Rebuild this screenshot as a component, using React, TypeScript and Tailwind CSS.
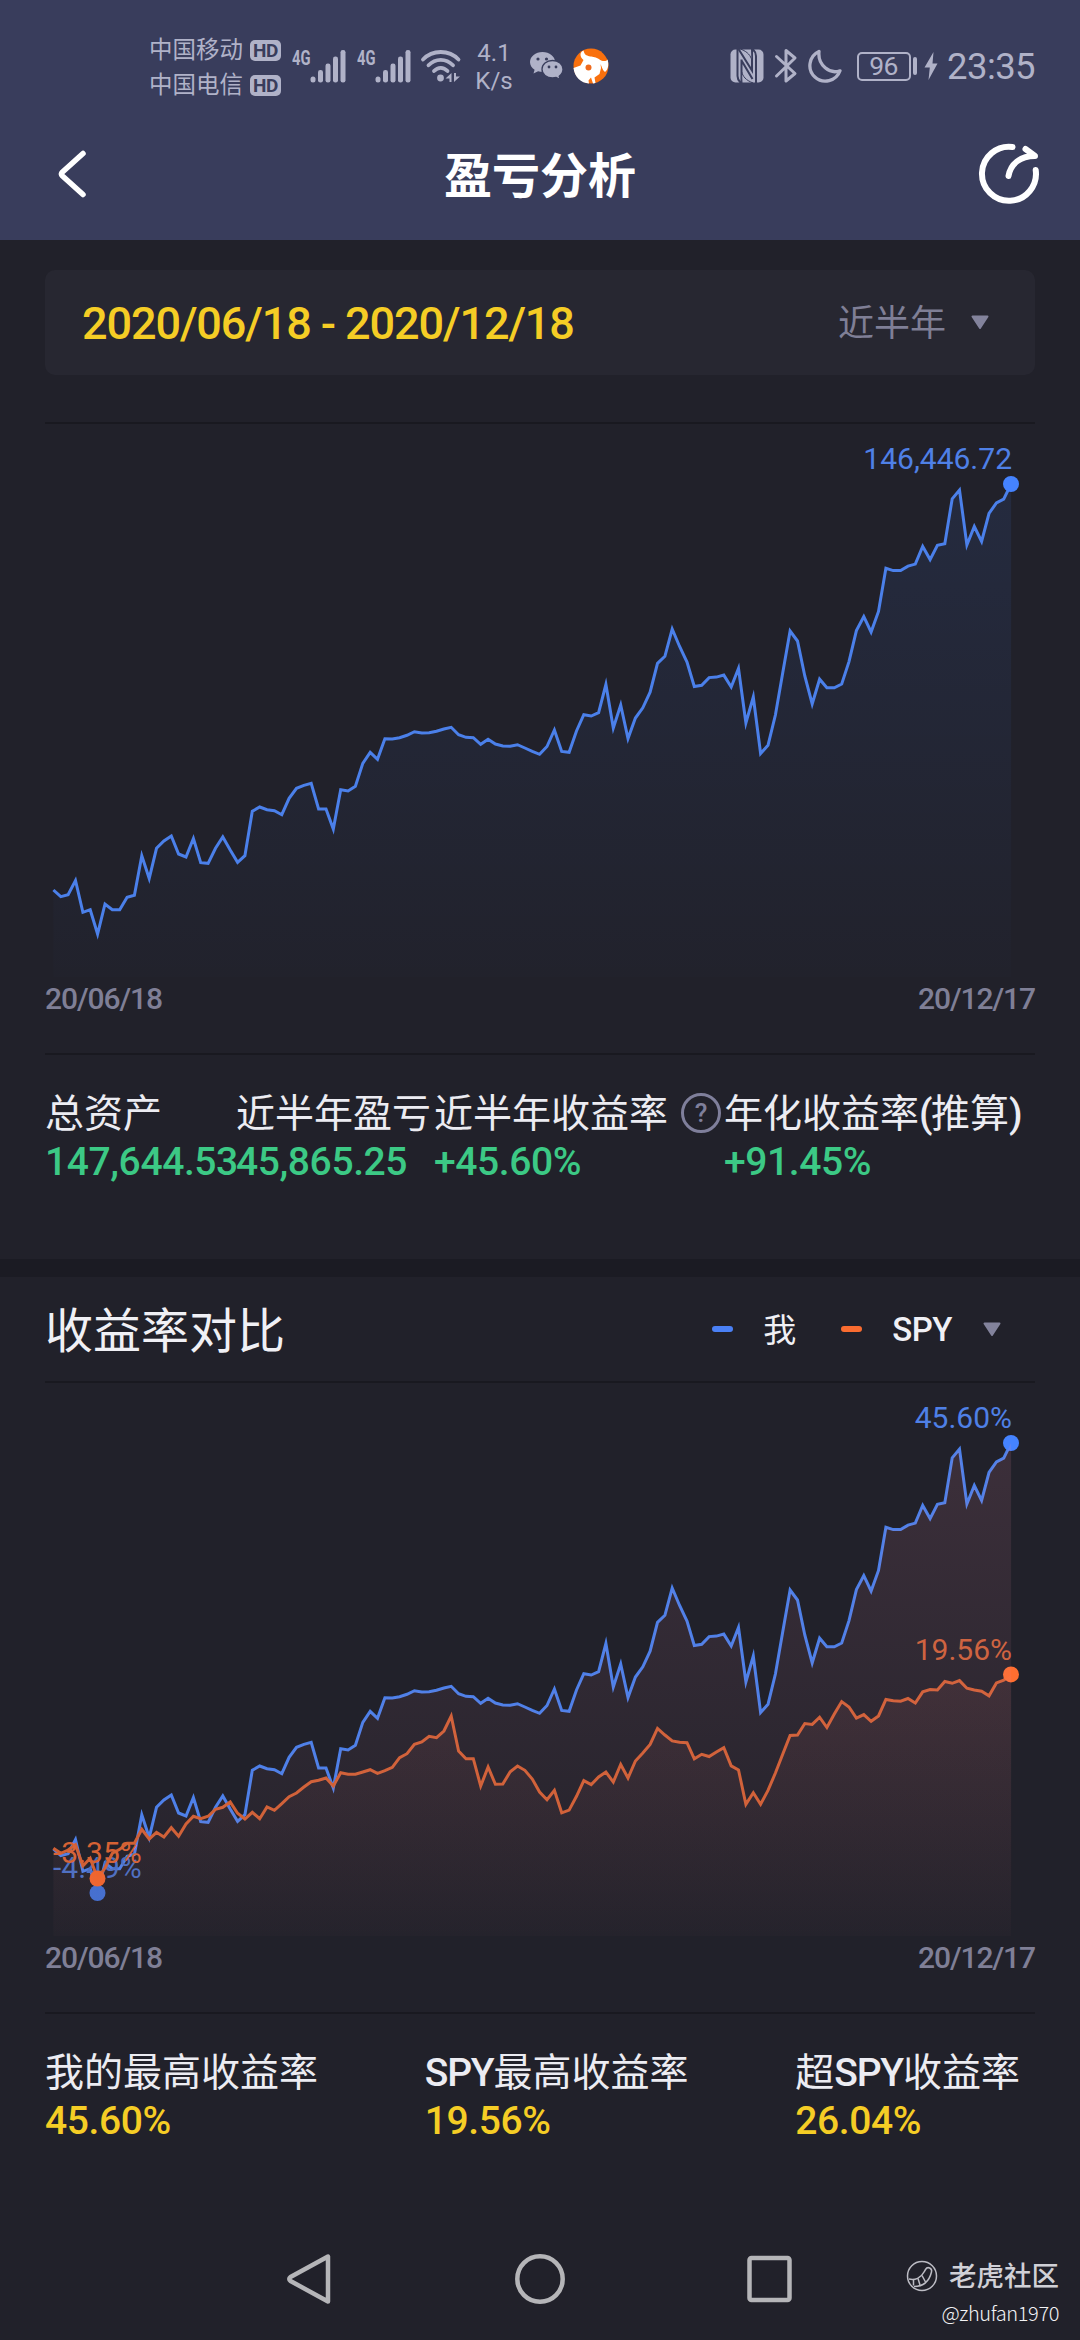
import React from "react";

const latin = "font-['Roboto','Noto_Sans_CJK_SC',sans-serif]";

const X0 = 53.4;
const STEP = 7.367;
const BASE_Y = 977;

const assetCurve = [
  890, 896.7, 894.7, 880.5, 912.3, 909.7, 934, 904, 909.7, 909.7, 897.3, 895.3, 855.7, 878.5, 848.3, 841, 836, 854,
  857, 838.5, 862.7, 863.3, 848.3, 837, 850, 862.3, 855.7, 811.3, 807, 809.7, 810.7, 814.7, 798.3, 788.3, 785.3,
  783.3, 809, 809, 829, 789.7, 791, 786.3, 763.3, 752.3, 759.3, 738.7, 739, 737.7, 735.3, 731.7, 733, 732.7, 731.3,
  729, 727.3, 734.7, 737.3, 737.7, 744.3, 739.3, 744, 746, 746.3, 744.7, 748, 751.3, 754.3, 746.5, 730, 751.4, 752.3,
  731, 714.7, 716, 712.7, 684.5, 728, 705, 738.5, 718, 707.8, 692.2, 663.3, 656.3, 629, 646.5, 662, 686.5, 685.3,
  677.6, 677.1, 675.1, 687, 668.5, 723, 697, 753.5, 745.3, 715, 673, 631, 641, 676, 704, 679.2, 687.8, 687.8, 684,
  661.6, 630.6, 616.5, 632, 611.4, 568.2, 570.6, 570.6, 566.1, 564.1, 546.5, 559.6, 545.3, 543.7, 498.8, 490, 545,
  526.5, 541.5, 513.5, 502.9, 499.2, 484,
];

const spyCurve = [
  889.3, 894.3, 891, 885.7, 907, 899.3, 919.5, 909, 894.3, 890.3, 884.3, 884.3, 870.3, 880, 873.3, 878, 868.7, 877.3,
  865, 857.3, 859.7, 857.3, 850.3, 848.3, 843, 854.3, 860, 853.3, 859.7, 848, 851.3, 844.7, 837.7, 834, 828, 822.7,
  821.3, 819, 827, 813.7, 815.3, 815.3, 813, 810.7, 814.3, 811.7, 808.3, 798.7, 794.7, 785.3, 783, 777.3, 778.7, 772,
  757, 792, 799.7, 799.7, 827, 808, 825.3, 825, 812.7, 807, 811.3, 820, 833, 840.8, 831.4, 853.8, 851.1, 837.3, 821.6,
  825.6, 818, 813.1, 823, 805.5, 819, 802, 794, 785.5, 769.4, 776, 781.9, 783.2, 783.7, 799.8, 795.3, 797.5, 793,
  788.6, 806.9, 810.9, 845.3, 833.7, 845.3, 831.4, 814, 795.3, 776.5, 776.1, 764.5, 765.4, 758.2, 768.5, 755.1,
  742.6, 748, 759.1, 755.6, 762.3, 756.9, 740.4, 741.7, 742.2, 739.5, 744, 732.8, 730.6, 731, 722.5, 724.3, 721.6,
  729.2, 731, 732.3, 736.8, 723.9, 721.2, 715.4,
];

const toPoints = (ys: number[]) => ys.map((y, i) => `${(X0 + i * STEP).toFixed(1)},${y}`).join(" ");
const toArea = (ys: number[]) =>
  `${X0},${BASE_Y} ${toPoints(ys)} ${(X0 + (ys.length - 1) * STEP).toFixed(1)},${BASE_Y}`;

function Line({ ys, color, width = 3 }: { ys: number[]; color: string; width?: number }) {
  return <polyline points={toPoints(ys)} fill="none" stroke={color} strokeWidth={width} strokeMiterlimit={6} />;
}

function ChartText({ x, y, end, color, children }: { x: number; y: number; end?: boolean; color: string; children: string }) {
  return (
    <text x={x} y={y} fill={color} textAnchor={end ? "end" : "start"} className={`${latin} text-[30px]`}>
      {children}
    </text>
  );
}

function Fade({ id, color, from, opacity }: { id: string; color: string; from: number; opacity: number }) {
  return (
    <linearGradient id={id} gradientUnits="userSpaceOnUse" x1="0" y1={from} x2="0" y2={BASE_Y}>
      <stop offset="0" stopColor={color} stopOpacity={opacity} />
      <stop offset="1" stopColor={color} stopOpacity={0.01} />
    </linearGradient>
  );
}

function AssetChart() {
  return (
    <svg viewBox="0 424 1080 553" className="block h-[553px] w-[1080px] shrink-0">
      <defs>
        <Fade id="asset" color="#4583ff" from={484} opacity={0.1} />
      </defs>
      <polygon points={toArea(assetCurve)} fill="url(#asset)" />
      <Line ys={assetCurve} color="#4b80ea" />
      <circle cx="1011" cy="484" r="8" fill="#4583ff" />
      <ChartText x={1012} y={469} end color="#4f80e6">146,446.72</ChartText>
    </svg>
  );
}

function CompareChart() {
  return (
    <svg viewBox="0 424 1080 553" className="block h-[553px] w-[1080px] shrink-0">
      <defs>
        <Fade id="mine" color="#f18da5" from={484} opacity={0.13} />
        <Fade id="spy" color="#f17d78" from={715} opacity={0.09} />
      </defs>
      <Line ys={assetCurve} color="#4b80ea" />
      <circle cx="1011" cy="484" r="8" fill="#4583ff" />
      <circle cx="97.5" cy="934" r="8" fill="#3f6fd2" />
      <ChartText x={1012} y={469} end color="#4f80e6">45.60%</ChartText>
      <ChartText x={53} y={919} color="#476fc4">-4.49%</ChartText>
      <Line ys={spyCurve} color="#cf5f33" />
      <circle cx="1011" cy="715.4" r="8" fill="#ff6e30" />
      <circle cx="97.5" cy="919.5" r="8" fill="#ee652d" />
      <ChartText x={1012} y={701} end color="#cc6038">19.56%</ChartText>
      <ChartText x={53} y={904} color="#d66234">-3.35%</ChartText>
      <polygon points={toArea(assetCurve)} fill="url(#mine)" />
      <polygon points={toArea(spyCurve)} fill="url(#spy)" />
    </svg>
  );
}

function Divider() {
  return <div className="mx-[45px] h-[2px] shrink-0 bg-[#191920]" />;
}

function DateAxis() {
  return (
    <div className={`mx-[45px] flex h-[42px] shrink-0 items-center justify-between ${latin} text-[30px] font-medium tracking-[-1.1px] text-[#7f7f96]`}>
      <span>20/06/18</span>
      <span>20/12/17</span>
    </div>
  );
}

function Stat({ label, value, className, valueClass }: { label: React.ReactNode; value: string; className?: string; valueClass: string }) {
  return (
    <div className={`${latin} text-[39px] whitespace-nowrap ${className ?? ""}`}>
      <div className="flex h-[48px] items-center pt-[2px] leading-[48px] text-[#ececf2]">{label}</div>
      <div className={`h-[48px] pt-px leading-[48px] font-medium tracking-[-0.4px] ${valueClass}`}>{value}</div>
    </div>
  );
}

function HelpIcon() {
  return (
    <span className="mb-[2px] ml-[13px] flex h-[40px] w-[40px] items-center justify-center rounded-full border-[3px] border-[#7f7f9b] text-[26px] font-medium text-[#7f7f9b]">
      ?
    </span>
  );
}

function Caret({ className }: { className: string }) {
  return (
    <svg viewBox="0 0 20 15" className={`h-[15px] w-[20px] ${className}`}>
      <path d="M2.5 1.5h15L10 13z" fill="#83839c" stroke="#83839c" strokeWidth="2" strokeLinejoin="round" />
    </svg>
  );
}

function HdBadge() {
  return (
    <span className="flex h-[21px] w-[31px] items-center justify-center rounded-[5px] bg-[#b0b2c8] font-['Roboto'] text-[19px] leading-[21px] font-bold tracking-[-0.5px] text-[#393d5c]">
      HD
    </span>
  );
}

function Carrier({ name }: { name: string }) {
  return (
    <div className="flex h-[35px] items-center gap-[7px]">
      <span className="w-[94px] text-[23.5px] leading-[35px] whitespace-nowrap">{name}</span>
      <HdBadge />
    </div>
  );
}

function Signal() {
  return (
    <svg viewBox="0 0 54 36" className="h-[36px] w-[54px]" fill="#b0b2c8">
      <text x="0" y="17" textLength="18.5" lengthAdjust="spacingAndGlyphs" className="font-['Roboto'] text-[21px] font-bold">4G</text>
      <rect x="18.5" y="28.5" width="5" height="6" rx="2.5" />
      <rect x="26" y="22" width="5" height="12.5" rx="2.3" />
      <rect x="33.5" y="15.5" width="5" height="19" rx="2.3" />
      <rect x="41" y="8.5" width="5" height="26" rx="2.3" />
      <rect x="48.5" y="2" width="5" height="32.5" rx="2.3" />
    </svg>
  );
}

function Wifi() {
  return (
    <svg viewBox="0 0 42 36" className="h-[36px] w-[42px]" fill="none" stroke="#b0b2c8" strokeWidth="3.8" strokeLinecap="round">
      <path d="M3 11.5C12.5 1.5 29 1.5 38.5 11.5" />
      <path d="M8.500 17.300C15.500 10 26 10 33 17.300" />
      <path d="M14 23c4-4.300 9.500-4.300 13.500 0" />
      <circle cx="20.500" cy="30" r="3.400" fill="#b0b2c8" stroke="none" />
      <path d="M31.500 25v9h-2v-3.500h-4zM34 34v-9h2v3.500h4z" fill="#b0b2c8" stroke="none" />
    </svg>
  );
}

function WeChat() {
  return (
    <svg viewBox="0 0 36 32" className="h-[32px] w-[36px]">
      <path d="M13.500 2C6.500 2 1 6.500 1 12c0 3.200 1.800 6 4.600 7.800L4.500 23.500l4.600-2.300c1.400.4 2.900.6 4.400.6C20.500 21.800 26 17.500 26 12S20.500 2 13.500 2z" fill="#b0b2c8" />
      <path d="M23.500 10.500C17.500 10.500 13 14.500 13 19.300s4.500 8.700 10.500 8.700c1.300 0 2.600-.2 3.700-.5l4 2-1-3.300c2.300-1.600 3.800-4.100 3.800-6.900 0-4.800-4.500-8.800-10.500-8.800z" fill="#b0b2c8" stroke="#393d5c" strokeWidth="1.300" />
      <g fill="#393d5c">
        <circle cx="9" cy="9" r="1.600" />
        <circle cx="17.500" cy="9" r="1.600" />
        <circle cx="20" cy="17" r="1.400" />
        <circle cx="27" cy="17" r="1.400" />
      </g>
    </svg>
  );
}

function BrokerLogo() {
  return (
    <svg viewBox="0 0 36 36" className="h-[36px] w-[36px]">
      <circle cx="18" cy="18" r="17.500" fill="#f9700d" />
      <path d="M10.500 2.500C6.500 4 6.500 9 10.500 12L7.500 17.500 .5 20C1.500 29 8 35 16 35.500L15.500 32.500 18 29.500 20 35.500 22.500 35 21.500 29.500 26.500 26 28 20 27.500 16C29 19 29.500 22.500 32 24 36 21.500 35.700 14 34.500 11.500 33 14 28.500 13.500 25 10.500 19.500 7 12 10.500 10.500 2.500z" fill="#fff" />
      <circle cx="15.500" cy="19.500" r="3" fill="#ef6a1c" />
    </svg>
  );
}

function Nfc() {
  return (
    <svg viewBox="0 0 34 34" className="h-[34px] w-[34px]">
      <rect x="0.500" y="0.500" width="33" height="33" rx="5" fill="#b0b2c8" />
      <g fill="none" stroke="#393d5c" strokeWidth="2">
        <path d="M7.500 0V27q0 4 3.500 7M26 34V7q0-4-3.500-7" />
        <path d="M11.500 10.500V34M11.500 11.500 22.500 30" />
        <path d="M8.500 0 22 21.500V0" />
      </g>
      <path d="M10.500 0h11l.5 11.500c-1.500-5-4-8.500-11.500-11.500zM23 34H12l-.5-11.500c1.500 5 4 8.500 11.500 11.500z" fill="#b0b2c8" stroke="#393d5c" strokeWidth="1" />
    </svg>
  );
}

function Bluetooth() {
  return (
    <svg viewBox="0 0 24 36" className="h-[36px] w-[24px]" fill="none" stroke="#b0b2c8" strokeWidth="3" strokeLinecap="round" strokeLinejoin="round">
      <path d="M2.500 8.500 21 25.500 12 33V2.500l9 7.500L2.500 28" />
    </svg>
  );
}

function Moon() {
  return (
    <svg viewBox="0 0 34 34" className="h-[34px] w-[34px]" fill="none" stroke="#b0b2c8" strokeWidth="3.300" strokeLinejoin="round">
      <path d="M11 2.500A15.500 15.500 0 1 0 32 21.800C22 25.500 9.500 16.500 11 2.500z" />
    </svg>
  );
}

function StatusBar() {
  return (
    <div className="flex h-[132px] shrink-0 items-center pr-[45px] pl-[149px] text-[#b0b2c8]">
      <div className="flex flex-col pt-[4px]">
        <Carrier name="中国移动" />
        <Carrier name="中国电信" />
      </div>
      <div className="ml-[11px] flex gap-[11px]">
        <Signal />
        <Signal />
      </div>
      <div className="ml-[9px]"><Wifi /></div>
      <div className="ml-[14px] flex w-[36px] flex-col items-center pt-[2px] text-[24px] leading-[28px]">
        <span>4.1</span>
        <span className="whitespace-nowrap">K/s</span>
      </div>
      <div className="ml-[17px]"><WeChat /></div>
      <div className="ml-[8px]"><BrokerLogo /></div>
      <div className="ml-auto flex items-center">
        <Nfc />
        <div className="ml-[10px]"><Bluetooth /></div>
        <div className="ml-[10px]"><Moon /></div>
        <div className="ml-[15px] flex h-[29px] w-[54px] items-center justify-center rounded-[5px] border-2 border-[#b0b2c8] text-[26.500px] leading-[26px] tracking-[-0.500px]">96</div>
        <div className="ml-[2px] h-[18px] w-[4.500px] rounded-[2px] bg-[#b0b2c8]" />
        <svg viewBox="0 0 14 28" className="ml-[7px] h-[28px] w-[14px]" fill="#b0b2c8">
          <path d="M9.500 0 .5 15.500h5.300L4.500 28 13.500 11.500H8.500z" />
        </svg>
        <span className="ml-[9px] pt-[2px] text-[36.500px] leading-[40px] tracking-[-0.600px]">23:35</span>
      </div>
    </div>
  );
}

function TitleBar() {
  return (
    <div className="flex h-[108px] shrink-0 items-center justify-between pr-[39px] pb-[24px] pl-[55px]">
      <svg viewBox="0 0 34 50" className="h-[50px] w-[34px]" fill="none" stroke="#fff" strokeWidth="5.500" strokeLinecap="round" strokeLinejoin="round">
        <path d="M28 4.500 7.500 23q-2 2 0 4L28 45.500" />
      </svg>
      <h1 className="pt-[5px] pl-[14px] text-[48px] leading-[60px] font-bold text-white">盈亏分析</h1>
      <svg viewBox="0 0 64 64" className="h-[64px] w-[64px]" fill="none" stroke="#fff" strokeWidth="6" strokeLinecap="round" strokeLinejoin="round">
        <path d="M35.500 5A27 27 0 1 0 58.700 28" />
        <path d="M31.500 34C33.500 22 43 14 58 14L48.500 7" />
      </svg>
    </div>
  );
}

function NavBar() {
  return (
    <div className="relative mt-auto flex h-[122px] shrink-0 items-center px-[285px]">
      <svg viewBox="0 0 510 56" className="h-[56px] w-[510px]" fill="none" stroke="#b5b5b8" strokeWidth="4.500" strokeLinejoin="round">
        <path d="M43 5.500V50.500L5.500 30q-2.500-2 0-4z" />
        <circle cx="255" cy="28" r="22.700" />
        <rect x="464.500" y="7" width="40" height="42" rx="2" />
      </svg>
      <div className="absolute top-[38px] right-[21px] flex flex-col items-end">
        <div className="flex h-[40px] items-center">
          <svg viewBox="0 0 32 32" className="h-[32px] w-[32px]" fill="none" stroke="#bcbcc4" strokeWidth="1.500">
            <circle cx="16" cy="16" r="14.500" />
            <path d="M3 19c6 1.500 12-1 15-7l1.500-2.500c2-3.500 7-1.500 6 2.500C23 22 17 26.500 8 26.500" />
            <path d="M7.500 19.500v6M12 18.500l2 6.500M16 15.500l3.500 6.500" />
          </svg>
          <span className="ml-[11px] pt-[2px] text-[27.500px] leading-[40px] font-medium text-[#d0d0d6]">老虎社区</span>
        </div>
        <span className="mt-[3px] h-[28px] font-['Noto_Sans_CJK_SC',sans-serif] text-[20px] leading-[28px] font-light tracking-[-0.400px] text-[#f2f2f5]">@zhufan1970</span>
      </div>
    </div>
  );
}

export default function App() {
  return (
    <div className={`flex h-[2340px] w-[1080px] flex-col overflow-hidden bg-[#21212a] ${latin}`}>
      <header className="flex h-[240px] shrink-0 flex-col bg-[#393d5c]">
        <StatusBar />
        <TitleBar />
      </header>

      <section className="flex h-[1019px] shrink-0 flex-col pt-[30px]">
        <div className="mx-[45px] mb-[47px] flex h-[105px] shrink-0 items-center rounded-[10px] bg-[#272731] pr-[45px] pl-[37px]">
          <span className="pt-[3px] text-[45px] leading-[60px] font-medium tracking-[-1.100px] whitespace-nowrap text-[#f5cd25]">2020/06/18 - 2020/12/18</span>
          <span className="ml-auto pt-[2px] text-[36px] leading-[50px] text-[#7f7f96]">近半年</span>
          <Caret className="ml-[24px]" />
        </div>
        <Divider />
        <AssetChart />
        <DateAxis />
        <div className="h-[34px] shrink-0" />
        <Divider />
        <div className="ml-[45px] flex pt-[34px]">
          <Stat className="w-[191px]" label="总资产" value="147,644.53" valueClass="text-[#3cc985]" />
          <Stat className="w-[198px]" label="近半年盈亏" value="45,865.25" valueClass="text-[#3cc985]" />
          <Stat className="w-[290px]" label={<>近半年收益率<HelpIcon /></>} value="+45.60%" valueClass="text-[#3cc985]" />
          <Stat
            label={<>年化收益率<span className="font-medium tracking-[-1.500px]">(</span>推算<span className="font-medium">)</span></>}
            value="+91.45%"
            valueClass="text-[#3cc985]"
          />
        </div>
      </section>

      <div className="h-[18px] shrink-0 bg-[#1b1b23]" />

      <section className="flex shrink-0 flex-col">
        <div className="flex h-[104px] shrink-0 items-center pr-[78px] pl-[45px] text-[#f0f0f5]">
          <h2 className="pt-[6px] text-[48px] leading-[60px]">收益率对比</h2>
          <span className="ml-auto h-[6px] w-[21px] rounded-[3px] bg-[#4a80f5]" />
          <span className="ml-[30px] pt-[3px] text-[33px] leading-[50px]">我</span>
          <span className="ml-[45px] h-[6px] w-[21px] rounded-[3px] bg-[#fa6c30]" />
          <span className="ml-[30px] pt-[2px] text-[33px] leading-[50px] font-medium tracking-[-0.500px]">SPY</span>
          <Caret className="ml-[30px]" />
        </div>
        <Divider />
        <CompareChart />
        <DateAxis />
        <div className="h-[34px] shrink-0" />
        <Divider />
        <div className="flex justify-between pt-[34px] pr-[60px] pl-[45px]">
          <Stat label="我的最高收益率" value="45.60%" valueClass="text-[#f5cd25]" />
          <Stat label={<><span className="font-medium tracking-[-1.200px]">SPY</span>最高收益率</>} value="19.56%" valueClass="text-[#f5cd25]" />
          <Stat label={<>超<span className="font-medium tracking-[-1.200px]">SPY</span>收益率</>} value="26.04%" valueClass="text-[#f5cd25]" />
        </div>
      </section>

      <NavBar />
    </div>
  );
}
